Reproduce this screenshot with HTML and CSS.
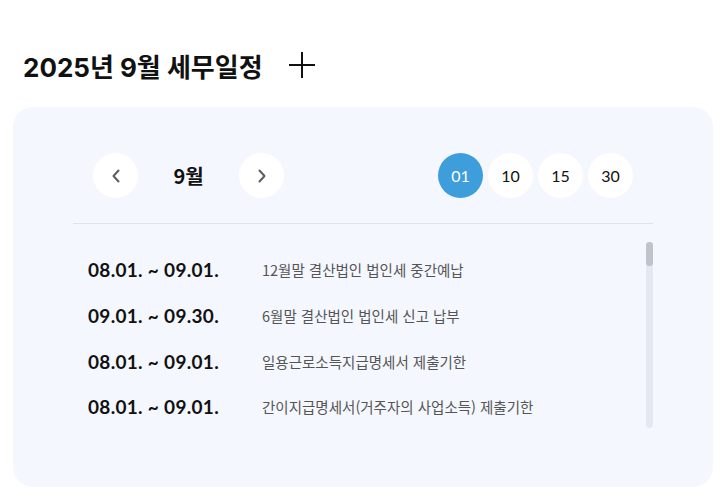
FILE: index.html
```html
<!DOCTYPE html>
<html lang="ko">
<head>
    <meta charset="UTF-8">
    <meta name="viewport" content="width=device-width, initial-scale=1.0">
    <title>세무일정</title>
    <link rel="stylesheet" href="styles.css">
</head>
<body>
    <section class="schedule">
        <div class="schedule-head">
            <h2>2025년 9월 세무일정</h2>
            <a href="#" class="more-btn" aria-label="더보기">
                <svg width="26" height="26" viewBox="0 0 26 26"><path d="M13 0V26M0 13H26" stroke="#111" stroke-width="2" fill="none"/></svg>
            </a>
        </div>

        <div class="card">
            <div class="nav-row">
                <div class="month-nav">
                    <button class="circle-btn" aria-label="이전 달">
                        <svg width="10" height="16" viewBox="0 0 10 16"><path d="M7.5 2.5L2.5 8L7.5 13.5" stroke="#5a5d66" stroke-width="2" fill="none" stroke-linecap="round" stroke-linejoin="round"/></svg>
                    </button>
                    <span class="month">9월</span>
                    <button class="circle-btn" aria-label="다음 달">
                        <svg width="10" height="16" viewBox="0 0 10 16"><path d="M2.5 2.5L7.5 8L2.5 13.5" stroke="#5a5d66" stroke-width="2" fill="none" stroke-linecap="round" stroke-linejoin="round"/></svg>
                    </button>
                </div>
                <div class="days">
                    <button class="circle-btn day active">01</button>
                    <button class="circle-btn day">10</button>
                    <button class="circle-btn day">15</button>
                    <button class="circle-btn day">30</button>
                </div>
            </div>

            <div class="list-wrap">
                <ul class="list">
                    <li><span class="date">08.01. ~ 09.01.</span><span class="desc">12월말 결산법인 법인세 중간예납</span></li>
                    <li><span class="date">09.01. ~ 09.30.</span><span class="desc">6월말 결산법인 법인세 신고 납부</span></li>
                    <li><span class="date">08.01. ~ 09.01.</span><span class="desc">일용근로소득지급명세서 제출기한</span></li>
                    <li><span class="date">08.01. ~ 09.01.</span><span class="desc">간이지급명세서(거주자의 사업소득) 제출기한</span></li>
                </ul>
                <div class="scrollbar"><div class="thumb"></div></div>
            </div>
        </div>
    </section>
</body>
</html>
```

FILE: styles.css
```css
* {
    margin: 0;
    padding: 0;
    box-sizing: border-box;
}

body {
    background-color: #fff;
    font-family: 'Noto Sans CJK KR', sans-serif;
    color: #111;
}

.schedule {
    padding: 46px 13px 0 13px;
}

.schedule-head {
    display: flex;
    align-items: center;
    gap: 26px;
    padding-left: 10px;
    height: 38px;
    margin-bottom: 23px;
}

.schedule-head h2 {
    font-family: Inter, 'Noto Sans CJK KR', sans-serif;
    font-size: 26px;
    font-weight: 700;
    color: #111;
}

.more-btn {
    display: flex;
}

.card {
    width: 700px;
    height: 380px;
    background-color: #f4f7fe;
    border-radius: 20px;
    padding: 46px 60px 0 60px;
}

.nav-row {
    display: flex;
    justify-content: space-between;
    align-items: center;
    padding: 0 20px 25px 20px;
    border-bottom: 1px solid #dde2eb;
}

.month-nav {
    display: flex;
    align-items: center;
}

.month {
    width: 101px;
    text-align: center;
    font-size: 20px;
    font-weight: 700;
    color: #111;
}

.circle-btn {
    width: 45px;
    height: 45px;
    border: none;
    border-radius: 50%;
    background-color: #fff;
    display: flex;
    justify-content: center;
    align-items: center;
    cursor: pointer;
}

.days {
    display: flex;
    gap: 5px;
}

.day {
    font-family: Lato, sans-serif;
    font-size: 16px;
    color: #111;
}

.day.active {
    background-color: #3d9edb;
    color: #fff;
}

.list-wrap {
    display: flex;
    margin-top: 18px;
    height: 186px;
}

.list {
    flex: 1;
    list-style: none;
    overflow: hidden;
    padding-top: 5px;
}

.list li {
    display: flex;
    align-items: center;
    height: 45.7px;
    padding-left: 15px;
}

.date {
    width: 174px;
    font-family: Lato, sans-serif;
    font-size: 19px;
    font-weight: 700;
    letter-spacing: 0.3px;
    color: #111;
}

.desc {
    font-size: 14.5px;
    color: #555;
}

.scrollbar {
    width: 7px;
    background-color: #e4e8f0;
    border-radius: 4px;
}

.thumb {
    height: 24px;
    background-color: #bfc3cb;
    border-radius: 4px;
}
```
